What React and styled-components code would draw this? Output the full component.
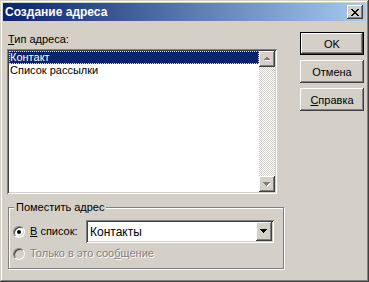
import React from "react";
import styled, { createGlobalStyle } from "styled-components";

const face = "#d4d0c8";

const GlobalStyle = createGlobalStyle`
  html, body {
    margin: 0;
    padding: 0;
    background: ${face};
  }
  body {
    font-family: "Liberation Sans", Arial, sans-serif;
    font-size: 11px;
    color: #000;
  }
`;

const raised = `
  box-shadow: inset -1px -1px #404040, inset 1px 1px #fff,
    inset -2px -2px #808080, inset 2px 2px ${face};
`;

const sunken = `
  box-shadow: inset 1px 1px #808080, inset -1px -1px #fff,
    inset 2px 2px #404040, inset -2px -2px ${face};
`;

const Window = styled.div`
  width: 369px;
  height: 282px;
  box-sizing: border-box;
  padding: 3px;
  background: ${face};
  box-shadow: inset -1px -1px #404040, inset 1px 1px ${face},
    inset -2px -2px #808080, inset 2px 2px #fff;
  display: flex;
  flex-direction: column;
`;

const TitleBar = styled.div`
  height: 18px;
  display: flex;
  align-items: center;
  justify-content: space-between;
  padding: 0 3px 0 2px;
  background: linear-gradient(to right, #0a246a, #a6caf0);
`;

const Title = styled.span`
  color: #fff;
  font-weight: bold;
  font-size: 12px;
`;

const CloseButton = styled.div`
  width: 16px;
  height: 14px;
  background: ${face};
  ${raised}
  display: flex;
  align-items: center;
  justify-content: center;
`;

const Body = styled.div`
  display: flex;
  padding: 0 0 0 4px;
`;

const LeftColumn = styled.div`
  width: 277px;
  display: flex;
  flex-direction: column;
  padding-top: 12px;
`;

const Label = styled.div`
  line-height: 13px;
  padding-left: 1px;
  margin-bottom: 3px;
`;

const Key = styled.span`
  text-decoration: underline;
`;

const ListBox = styled.div`
  width: 270px;
  height: 145px;
  box-sizing: border-box;
  padding: 2px;
  background: #fff;
  ${sunken}
  display: flex;
`;

const Items = styled.div`
  flex: 1;
`;

const Item = styled.div`
  height: 13px;
  line-height: 13px;
  padding-left: 1px;
  background: ${(p) => (p.$selected ? "#0a246a" : "transparent")};
  color: ${(p) => (p.$selected ? "#fff" : "#000")};
  outline: ${(p) => (p.$selected ? "1px dotted #f5db95" : "none")};
  outline-offset: -1px;
`;

const ScrollBar = styled.div`
  width: 16px;
  display: flex;
  flex-direction: column;
  justify-content: space-between;
  background: repeating-conic-gradient(#fff 0 25%, ${face} 0 50%) 0 0 / 2px
    2px;
`;

const ArrowButton = styled.div`
  width: ${(p) => p.$w || 16}px;
  height: ${(p) => p.$h || 16}px;
  background: ${face};
  ${raised}
  display: flex;
  align-items: center;
  justify-content: center;
`;

const GroupBox = styled.fieldset`
  margin: 7px 0 0 1px;
  width: 276px;
  box-sizing: border-box;
  padding: 6px 8px 8px 4px;
  border: 1px solid #808080;
  box-shadow: inset 1px 1px #fff, 1px 1px #fff;
  display: flex;
  flex-direction: column;
  gap: 4px;
`;

const Legend = styled.legend`
  padding: 0 2px;
  margin-left: 1px;
  line-height: 13px;
  background: ${face};
`;

const RadioRow = styled.div`
  display: flex;
  align-items: center;
  color: ${(p) => (p.$disabled ? "#808080" : "#000")};
  text-shadow: ${(p) => (p.$disabled ? "1px 1px #fff" : "none")};
`;

const Radio = styled.span`
  width: 12px;
  height: 12px;
  box-sizing: border-box;
  border-radius: 50%;
  background: ${(p) => (p.$disabled ? face : "#fff")};
  border: 1px solid;
  border-color: #808080 #fff #fff #808080;
  box-shadow: inset 1px 1px #404040, inset -1px -1px ${face};
  display: flex;
  align-items: center;
  justify-content: center;
  margin-right: 5px;
  flex-shrink: 0;
`;

const Dot = styled.span`
  width: 4px;
  height: 4px;
  border-radius: 50%;
  background: #000;
`;

const RadioText = styled.span`
  width: ${(p) => (p.$w ? `${p.$w}px` : "auto")};
  line-height: 13px;
`;

const Combo = styled.div`
  width: 188px;
  height: 23px;
  box-sizing: border-box;
  padding: 2px;
  background: #fff;
  ${sunken}
  display: flex;
  align-items: center;
`;

const ComboText = styled.span`
  flex: 1;
  padding-left: 2px;
  font-size: 12px;
`;

const RightColumn = styled.div`
  margin-left: 16px;
  padding-top: 11px;
  display: flex;
  flex-direction: column;
  gap: 5px;
`;

const Button = styled.div`
  width: 64px;
  height: 23px;
  box-sizing: border-box;
  background: ${face};
  display: flex;
  align-items: center;
  justify-content: center;
  ${(p) =>
    p.$default
      ? `border: 1px solid #000;
         box-shadow: inset -1px -1px #404040, inset 1px 1px #fff,
           inset -2px -2px #808080, inset 2px 2px ${face};`
      : raised}
`;

const UpArrow = ({ color = "#808080" }) => (
  <svg width="7" height="5" viewBox="0 0 7 5">
    <path d="M4 1h1v1h1v1h1v1H1V3h1V2h1V1z" fill="#fff" />
    <path d="M3 0h1v1h1v1h1v1H0V2h1V1h1V0z" fill={color} />
  </svg>
);

const DownArrow = ({ color = "#808080", shadow = true }) => (
  <svg width="8" height="5" viewBox="0 0 8 5">
    {shadow && <path d="M1 1h7v1H7v1H6v1H5v1H4V4H3V3H2V2H1z" fill="#fff" />}
    <path d="M0 0h7v1H6v1H5v1H4v1H3V3H2V2H1V1H0z" fill={color} />
  </svg>
);

const CloseIcon = () => (
  <svg width="8" height="7" viewBox="0 0 8 7">
    <path
      d="M0 0h2v1h1v1h2V1h1V0h2v1H7v1H6v1H5v1h1v1h1v1h1v1H6V6H5V5H3v1H2v1H0V6h1V5h1V4h1V3H2V2H1V1H0z"
      fill="#000"
    />
  </svg>
);

export default function App() {
  return (
    <>
      <GlobalStyle />
      <Window>
        <TitleBar>
          <Title>Создание адреса</Title>
          <CloseButton>
            <CloseIcon />
          </CloseButton>
        </TitleBar>
        <Body>
          <LeftColumn>
            <Label>
              <Key>Т</Key>ип адреса:
            </Label>
            <ListBox>
              <Items>
                <Item $selected>Контакт</Item>
                <Item>Список рассылки</Item>
              </Items>
              <ScrollBar>
                <ArrowButton>
                  <UpArrow />
                </ArrowButton>
                <ArrowButton>
                  <DownArrow />
                </ArrowButton>
              </ScrollBar>
            </ListBox>
            <GroupBox>
              <Legend>Поместить адрес</Legend>
              <RadioRow>
                <Radio>
                  <Dot />
                </Radio>
                <RadioText $w={56}>
                  <Key>В</Key> список:
                </RadioText>
                <Combo>
                  <ComboText>Контакты</ComboText>
                  <ArrowButton $w={16} $h={19}>
                    <DownArrow color="#000" shadow={false} />
                  </ArrowButton>
                </Combo>
              </RadioRow>
              <RadioRow $disabled>
                <Radio $disabled />
                <RadioText>
                  Только в это соо<Key>б</Key>щение
                </RadioText>
              </RadioRow>
            </GroupBox>
          </LeftColumn>
          <RightColumn>
            <Button $default>OK</Button>
            <Button>Отмена</Button>
            <Button>
              <span>
                <Key>С</Key>правка
              </span>
            </Button>
          </RightColumn>
        </Body>
      </Window>
    </>
  );
}
